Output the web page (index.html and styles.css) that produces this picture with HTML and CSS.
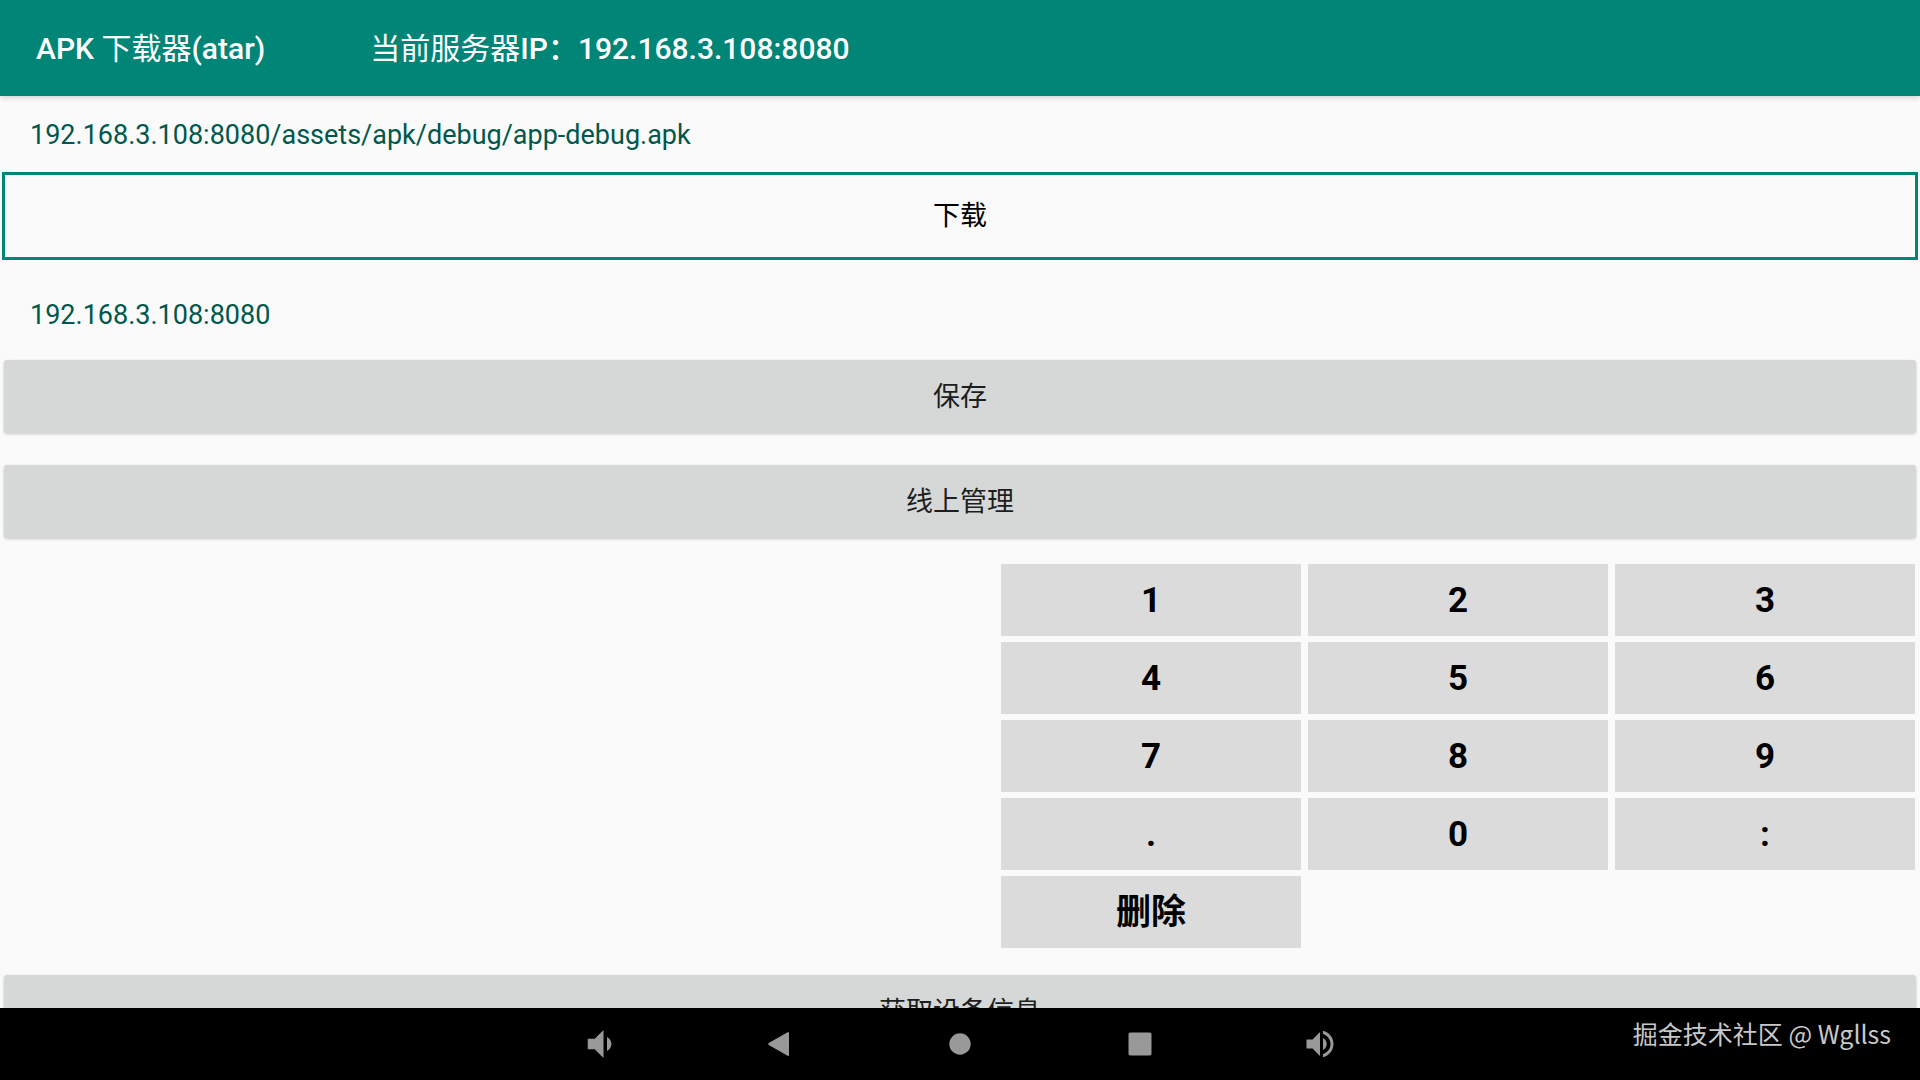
FILE: index.html
```html
<!DOCTYPE html>
<html lang="zh-CN">
<head>
    <meta charset="UTF-8">
    <meta name="viewport" content="width=device-width, initial-scale=1.0">
    <title>APK 下载器(atar)</title>
    <link rel="stylesheet" href="styles.css">
</head>
<body>
    <header class="app-bar">
        <h1>APK <span class="cjk">下载器</span>(atar)</h1>
        <p><span class="cjk">当前服务器</span>IP：192.168.3.108:8080</p>
    </header>
    <main>
        <input class="address" type="text" id="apkUrl" aria-label="APK 地址" value="192.168.3.108:8080/assets/apk/debug/app-debug.apk">
        <button class="download" type="button">下载</button>
        <input class="address server" type="text" id="serverIp" aria-label="服务器 IP" value="192.168.3.108:8080">
        <button class="action" type="button">保存</button>
        <button class="action" type="button">线上管理</button>
        <div class="keypad">
            <button type="button">1</button>
            <button type="button">2</button>
            <button type="button">3</button>
            <button type="button">4</button>
            <button type="button">5</button>
            <button type="button">6</button>
            <button type="button">7</button>
            <button type="button">8</button>
            <button type="button">9</button>
            <button type="button">.</button>
            <button type="button">0</button>
            <button type="button">:</button>
            <button type="button">删除</button>
        </div>
        <button class="action" type="button">获取设备信息</button>
    </main>
    <nav class="nav-bar">
        <button type="button" aria-label="音量减">
            <svg width="42" height="42" viewBox="0 0 24 24"><path d="M18.5 12c0-1.77-1.02-3.29-2.5-4.03v8.05c1.48-.73 2.5-2.25 2.5-4.02zM5 9v6h4l5 5V4L9 9H5z"/></svg>
        </button>
        <button type="button" aria-label="返回">
            <svg width="36" height="36" viewBox="0 0 36 36"><path d="M25.6 6.2Q27 5.5 27 7v22q0 1.5-1.4.8L6.8 19q-1.4-1 0-2z"/></svg>
        </button>
        <button type="button" aria-label="主页">
            <svg width="36" height="36" viewBox="0 0 36 36"><circle cx="18" cy="18" r="10.7"/></svg>
        </button>
        <button type="button" aria-label="最近任务">
            <svg width="36" height="36" viewBox="0 0 36 36"><rect x="6.5" y="6.5" width="23" height="23" rx="2"/></svg>
        </button>
        <button type="button" aria-label="音量加">
            <svg width="36" height="36" viewBox="0 0 24 24"><path d="M3 9v6h4l5 5V4L7 9H3zm13.5 3c0-1.77-1.02-3.29-2.5-4.03v8.05c1.48-.73 2.5-2.25 2.5-4.02zM14 3.23v2.06c2.89.86 5 3.54 5 6.71s-2.11 5.85-5 6.71v2.06c4.01-.91 7-4.49 7-8.77s-2.99-7.86-7-8.77z"/></svg>
        </button>
        <span class="watermark">掘金技术社区 @ Wgllss</span>
    </nav>
</body>
</html>
```
FILE: styles.css
```css
* {
    box-sizing: border-box;
}
body {
    margin: 0;
    height: 100vh;
    display: flex;
    flex-direction: column;
    font-family: Roboto, "Noto Sans CJK SC", sans-serif;
    font-size: 27px;
    line-height: 36px;
    background-color: #fafafa;
    color: #000;
}
button, input {
    font: inherit;
    color: inherit;
    margin: 0;
    border: none;
    border-radius: 0;
}
button {
    cursor: pointer;
}
.app-bar {
    display: flex;
    align-items: center;
    flex-shrink: 0;
    gap: 105px;
    height: 96px;
    padding: 2px 36px 0;
    background-color: #008577;
    color: white;
    box-shadow: 0 1px 6px rgba(0, 0, 0, 0.2);
    z-index: 1;
}
.app-bar h1, .app-bar p {
    margin: 0;
    font-size: 30px;
    font-weight: 500;
    line-height: 44px;
    white-space: nowrap;
}
.cjk {
    font-weight: 400;
}
main {
    display: flex;
    flex-direction: column;
    flex: 1;
    min-height: 0;
    overflow: hidden;
}
main > * {
    flex-shrink: 0;
}
.address {
    height: 76px;
    padding: 2px 30px 0;
    background: transparent;
    color: #00574b;
    outline: none;
}
.download {
    height: 88px;
    margin: 0 2px;
    border: 3px solid #008577;
    background: transparent;
}
.server {
    height: 100px;
    padding-top: 10px;
}
.action {
    height: 73px;
    margin: 0 4px 32px;
    border-radius: 3px;
    background-color: #d6d8d7;
    color: #1c1d1d;
    box-shadow: 0 1px 3px rgba(0, 0, 0, 0.2);
}
.keypad {
    display: grid;
    grid-template-columns: repeat(3, 300px);
    gap: 6px 7px;
    margin: -6px 5px 27px auto;
}
.keypad button {
    height: 72px;
    padding: 2px 0 0;
    background-color: #dbdbdb;
    font-size: 35px;
    font-weight: 700;
}
.nav-bar {
    position: relative;
    display: flex;
    justify-content: center;
    flex-shrink: 0;
    height: 72px;
    background-color: #000;
}
.nav-bar button {
    display: flex;
    align-items: center;
    justify-content: center;
    width: 180px;
    padding: 0;
    background: transparent;
}
.nav-bar svg {
    fill: #999;
}
.watermark {
    position: absolute;
    right: 29px;
    top: 7px;
    font-family: "Noto Sans CJK SC", sans-serif;
    font-size: 25px;
    color: #c8c8c8;
}
```
